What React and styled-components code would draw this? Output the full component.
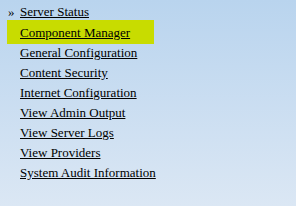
import React from "react";
import styled, { createGlobalStyle } from "styled-components";

const GlobalStyle = createGlobalStyle`
  html, body {
    margin: 0;
    padding: 0;
  }
  body {
    width: 296px;
    height: 206px;
    overflow: hidden;
    background: linear-gradient(180deg, #b9d4ee 0%, #dbe7f4 100%);
  }
`;

const Menu = styled.ul`
  list-style: none;
  margin: 0;
  padding: 2px 0 0 0;
`;

const Item = styled.li`
  display: flex;
  align-items: center;
  height: 20px;
  width: 147px;
  margin-left: 7px;
  font-family: "Liberation Serif", "Times New Roman", serif;
  font-size: 13px;
  line-height: 20px;
  ${(p) =>
    p.$active &&
    `
    background: #c8dc00;
    height: 23px;
    margin-top: -2px;
    margin-bottom: -1px;
    padding-top: 1px;
  `}
`;

const Marker = styled.span`
  flex-shrink: 0;
  width: 13px;
  padding-left: 1px;
  box-sizing: border-box;
  color: #000;
`;

const Link = styled.a`
  flex-shrink: 0;
  color: #000;
  font-family: "Liberation Serif", "Times New Roman", serif;
  text-decoration: underline;
  cursor: pointer;
  white-space: nowrap;
`;

const items = [
  "Server Status",
  "Component Manager",
  "General Configuration",
  "Content Security",
  "Internet Configuration",
  "View Admin Output",
  "View Server Logs",
  "View Providers",
  "System Audit Information",
];

export default function App() {
  return (
    <>
      <GlobalStyle />
      <Menu>
        {items.map((label, i) => (
          <Item key={label} $active={i === 1}>
            <Marker>{i === 0 ? "»" : ""}</Marker>
            <Link>{label}</Link>
          </Item>
        ))}
      </Menu>
    </>
  );
}
